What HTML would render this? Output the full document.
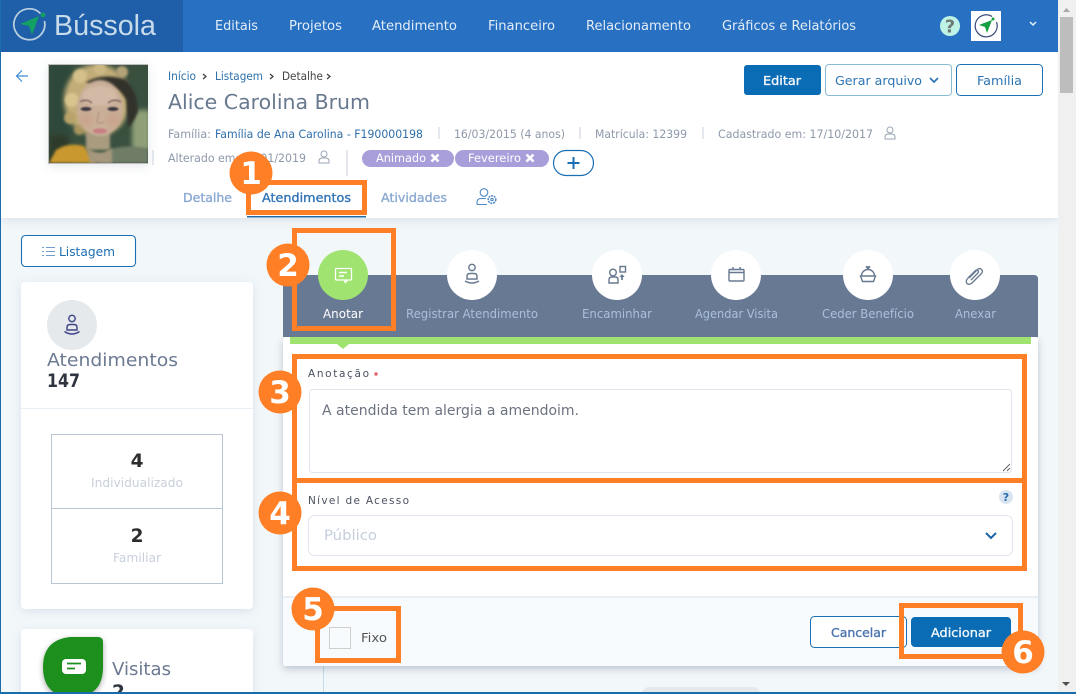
<!DOCTYPE html>
<html lang="pt-BR"><head><meta charset="utf-8"><title>Bússola</title>
<style>
html,body{margin:0;padding:0;width:1076px;height:694px;overflow:hidden;background:#fff}
svg{display:block}
text{font-family:"DejaVu Sans","Liberation Sans",sans-serif;font-size:12px}
.nav{font-size:13.500px;fill:#e3edf7}
.m{fill:#8d98aa;font-size:11.500px}
.b{font-weight:bold}
.sb{font-size:12.500px;stroke-width:.35px}
.lab{font-size:12.500px;fill:#a9bfdc}
.digit{font-size:31px;font-weight:bold;fill:#fff;text-anchor:middle}
.or{fill:none;stroke:#ff7f27;stroke-width:5}
.ic{fill:none;stroke:#66788f;stroke-width:1.400}
</style></head><body>
<svg width="1076" height="694" viewBox="0 0 1076 694" xmlns="http://www.w3.org/2000/svg">
<defs>
<filter id="s1" x="-10%" y="-10%" width="120%" height="125%"><feDropShadow dx="0" dy="2" stdDeviation="5" flood-color="#7f93a8" flood-opacity=".22"/></filter>
<filter id="s2" x="-10%" y="-10%" width="120%" height="120%"><feDropShadow dx="0" dy="3" stdDeviation="4" flood-color="#66788f" flood-opacity=".4"/></filter>
<filter id="s3" x="-30%" y="-30%" width="160%" height="160%"><feDropShadow dx="0" dy="2" stdDeviation="3" flood-color="#000" flood-opacity=".35"/></filter>
<filter id="bl" x="-30%" y="-30%" width="160%" height="160%"><feGaussianBlur stdDeviation="2.500"/></filter>
<filter id="bm" x="-30%" y="-30%" width="160%" height="160%"><feGaussianBlur stdDeviation="1.400"/></filter>
<filter id="bs" x="-30%" y="-30%" width="160%" height="160%"><feGaussianBlur stdDeviation=".7"/></filter>
<clipPath id="ph"><rect x="49" y="65" width="99" height="98"/></clipPath>
</defs>

<!-- page bg -->
<rect x="0" y="0" width="1058" height="694" fill="#f2f7fa"/>
<!-- header white -->
<rect x="1" y="52" width="1057" height="166" fill="#fff" filter="url(#s1)"/>
<!-- nav -->
<rect x="1" y="0" width="1057" height="52" fill="#2870c2"/>
<rect x="1" y="0" width="182" height="52" fill="#1f5ea8"/>
<path d="M40.500 13.500A15.500 15.500 0 1 0 44.500 21" fill="none" stroke="#b9cfe0" stroke-width="1.700"/>
<circle cx="43" cy="15" r="2.400" fill="#12a065"/>
<path d="M20 24L39 16L32 35L29 26Z" fill="#12a065"/>
<text x="54" y="35" fill="#c7dbeb" textLength="102" lengthAdjust="spacingAndGlyphs" style="font-family:'Liberation Sans',sans-serif;font-size:29px">Bússola</text>
<text class="nav" x="215" y="30" textLength="43" lengthAdjust="spacingAndGlyphs">Editais</text>
<text class="nav" x="289" y="30" textLength="53" lengthAdjust="spacingAndGlyphs">Projetos</text>
<text class="nav" x="372" y="30" textLength="85" lengthAdjust="spacingAndGlyphs">Atendimento</text>
<text class="nav" x="488" y="30" textLength="67" lengthAdjust="spacingAndGlyphs">Financeiro</text>
<text class="nav" x="586" y="30" textLength="105" lengthAdjust="spacingAndGlyphs">Relacionamento</text>
<text class="nav" x="722" y="30" textLength="134" lengthAdjust="spacingAndGlyphs">Gráficos e Relatórios</text>
<circle cx="950" cy="26" r="10" fill="#bff3e5"/>
<text x="950" y="32.500" text-anchor="middle" class="b" style="font-size:18px" fill="#6f7b78">?</text>
<rect x="971" y="11" width="30" height="30" fill="#fff"/>
<path d="M992 16.500A11 11 0 1 0 996.500 22" fill="none" stroke="#3b4a7d" stroke-width="1.200"/>
<circle cx="993" cy="19" r="1.500" fill="#12a040"/>
<path d="M979 25L992 20L987 33L985 27Z" fill="#12a040"/>
<path d="M1030 22l3 3 3-3" fill="none" stroke="#e6eef7" stroke-width="1.500"/>

<!-- back arrow -->
<path d="M28 76H17M22 70.500L16.500 76L22 81.500" fill="none" stroke="#3f8ad0" stroke-width="1.200"/>

<!-- photo -->
<rect x="48" y="64" width="100" height="100" fill="#bcbcbc" filter="url(#s1)"/>
<g clip-path="url(#ph)">
<rect x="49" y="65" width="99" height="98" fill="#39503f"/>
<rect x="49" y="65" width="22" height="70" fill="#2f4a3a" filter="url(#bl)"/>
<rect x="132" y="110" width="18" height="40" fill="#8f9f78" filter="url(#bl)"/>
<rect x="49" y="135" width="20" height="30" fill="#2e3a2c" filter="url(#bl)"/>
<!-- frizzy blonde hair -->
<ellipse cx="97" cy="100" rx="33" ry="36" fill="#c2ad78" filter="url(#bl)"/>
<circle cx="72" cy="100" r="7" fill="#d8c58e" filter="url(#bm)"/>
<circle cx="70" cy="118" r="6" fill="#b9a36a" filter="url(#bm)"/>
<circle cx="80" cy="76" r="7" fill="#d4c08a" filter="url(#bm)"/>
<circle cx="100" cy="69" r="6" fill="#cbb783" filter="url(#bm)"/>
<circle cx="122" cy="72" r="6" fill="#b4a278" filter="url(#bm)"/>
<circle cx="79" cy="130" r="5" fill="#a8955e" filter="url(#bm)"/>
<!-- dark hair -->
<path d="M86 82Q105 72 126 80Q138 92 138 112Q134 122 128 128L126 100Q118 84 100 86Q92 86 86 82Z" fill="#33302b" filter="url(#bm)"/>
<!-- neck, face -->
<rect x="86" y="132" width="24" height="18" fill="#a89b7e" filter="url(#bm)"/>
<ellipse cx="100" cy="108" rx="23" ry="28" fill="#c9ae98" filter="url(#bm)"/>
<ellipse cx="100" cy="96" rx="17" ry="10" fill="#d2bba6" filter="url(#bm)"/>
<ellipse cx="86" cy="120" rx="7" ry="7" fill="#c9a58e" filter="url(#bl)"/>
<ellipse cx="113" cy="120" rx="7" ry="7" fill="#c9a58e" filter="url(#bl)"/>
<!-- clothes -->
<path d="M49 163L56 150Q68 142 84 146L96 163Z" fill="#c9982f" filter="url(#bm)"/>
<path d="M100 163L108 150Q128 143 148 150V163Z" fill="#6f7d66" filter="url(#bm)"/>
<path d="M86 146Q98 158 112 148L112 163H90Z" fill="#a6987e" filter="url(#bm)"/>
<!-- eyes, brows, mouth -->
<path d="M80 102Q86 98 92 103M108 103Q114 98 121 102" fill="none" stroke="#77615a" stroke-width="1.300" filter="url(#bs)"/>
<ellipse cx="86" cy="109" rx="5.500" ry="2" fill="#3c3740" filter="url(#bs)"/>
<ellipse cx="113" cy="109" rx="5.500" ry="2" fill="#3c3740" filter="url(#bs)"/>
<path d="M99 112L97 122Q100 124 104 122" fill="none" stroke="#ae8d7b" filter="url(#bs)"/>
<ellipse cx="100" cy="131" rx="7" ry="2.600" fill="#c87f82" filter="url(#bs)"/>
</g>

<!-- breadcrumbs & name -->
<text x="168" y="80" textLength="28" lengthAdjust="spacingAndGlyphs" style="font-size:11.500px" fill="#2d70ad">Início</text>
<path d="M203 74l3 2.500-3 2.500" fill="none" stroke="#444" stroke-width="1.300"/>
<text x="215" y="80" textLength="48" lengthAdjust="spacingAndGlyphs" style="font-size:11.500px" fill="#2d70ad">Listagem</text>
<path d="M270 74l3 2.500-3 2.500" fill="none" stroke="#444" stroke-width="1.300"/>
<text x="282" y="80" textLength="41" lengthAdjust="spacingAndGlyphs" style="font-size:11.500px" fill="#444">Detalhe</text>
<path d="M327 74l3 2.500-3 2.500" fill="none" stroke="#444" stroke-width="1.300"/>
<text x="168" y="109" textLength="202" lengthAdjust="spacingAndGlyphs" style="font-size:20.500px" fill="#68788f">Alice Carolina Brum</text>

<text class="m" x="168" y="138" textLength="43" lengthAdjust="spacingAndGlyphs">Família:</text>
<text x="215" y="138" textLength="208" lengthAdjust="spacingAndGlyphs" style="font-size:11.500px" fill="#2f6ea8">Família de Ana Carolina - F190000198</text>
<path d="M439 127v12M580 127v12M703 127v12" stroke="#c9d2dc"/>
<text class="m" x="454" y="138" textLength="111" lengthAdjust="spacingAndGlyphs">16/03/2015 (4 anos)</text>
<text class="m" x="595" y="138" textLength="92" lengthAdjust="spacingAndGlyphs">Matrícula: 12399</text>
<text class="m" x="718" y="138" textLength="155" lengthAdjust="spacingAndGlyphs">Cadastrado em: 17/10/2017</text>
<g fill="none" stroke="#9aa5b5"><circle cx="890" cy="130" r="3"/><path d="M885 139v-1.500q0-3.500 3-3.500h4q3 0 3 3.500v1.500z"/></g>

<path d="M153 150v15M347 150v26" stroke="#c9d2dc"/>
<text class="m" x="168" y="162" textLength="138" lengthAdjust="spacingAndGlyphs">Alterado em: 17/01/2019</text>
<g fill="none" stroke="#9aa5b5"><circle cx="324" cy="154" r="3"/><path d="M319 163v-1.500q0-3.500 3-3.500h4q3 0 3 3.500v1.500z"/></g>
<rect x="362" y="150" width="92" height="17" rx="8.500" fill="#a89fda"/>
<rect x="455" y="150" width="94" height="17" rx="8.500" fill="#a89fda"/>
<text x="376" y="162" textLength="50" lengthAdjust="spacingAndGlyphs" style="font-size:11.500px" fill="#fff">Animado</text>
<path d="M431.500 154.500l7 7M438.500 154.500l-7 7" stroke="#fff" stroke-width="2.600"/>
<text x="468" y="162" textLength="53" lengthAdjust="spacingAndGlyphs" style="font-size:11.500px" fill="#fff">Fevereiro</text>
<path d="M526.500 154.500l7 7M533.500 154.500l-7 7" stroke="#fff" stroke-width="2.600"/>
<rect x="553.500" y="150.500" width="40" height="25" rx="12.500" fill="#fff" stroke="#1a6fb5" stroke-width="1.200"/>
<path d="M567.500 163h12M573.500 157v12" stroke="#1a6fb5" stroke-width="2"/>

<!-- tabs -->
<text x="183" y="202" textLength="49" lengthAdjust="spacingAndGlyphs" class="sb" fill="#8aa9d2" stroke="#8aa9d2">Detalhe</text>
<text x="262" y="202" textLength="89" lengthAdjust="spacingAndGlyphs" class="sb" fill="#2f73b5" stroke="#2f73b5">Atendimentos</text>
<text x="381" y="202" textLength="66" lengthAdjust="spacingAndGlyphs" class="sb" fill="#8aa9d2" stroke="#8aa9d2">Atividades</text>
<g fill="none" stroke="#4f88c6" stroke-width="1.100"><circle cx="484" cy="192.500" r="3.800"/><path d="M477 204.500v-2q0-4 4-4h5M477 204.500h10"/><circle cx="492" cy="199.500" r="3.800" stroke-dasharray="2 .8" stroke-width="1.500"/><circle cx="492" cy="199.500" r="1.200"/></g>
<rect x="247" y="216" width="119" height="1.500" fill="#1f6aa5"/>

<!-- buttons top -->
<rect x="744" y="65" width="77" height="30" rx="3" fill="#0a6cb5"/>
<text x="763" y="85" textLength="38" lengthAdjust="spacingAndGlyphs" class="sb" fill="#f0f6fb" stroke="#f0f6fb">Editar</text>
<rect x="825.500" y="64.500" width="126" height="31" rx="3.500" fill="#fff" stroke="#8abbd8"/>
<text x="835" y="85" textLength="87" lengthAdjust="spacingAndGlyphs" style="font-size:12.500px" fill="#2d74b5">Gerar arquivo</text>
<path d="M930 78l4 4 4-4" fill="none" stroke="#2d74b5" stroke-width="1.700"/>
<rect x="956.500" y="64.500" width="86" height="31" rx="4" fill="#fff" stroke="#1a6fb5"/>
<text x="977" y="85" textLength="45" lengthAdjust="spacingAndGlyphs" style="font-size:12.500px" fill="#2d74b5">Família</text>

<!-- left col -->
<rect x="21.500" y="235.500" width="114" height="31" rx="4" fill="#fff" stroke="#1a6fb5" stroke-width="1.100"/>
<path d="M46 247.500h9M46 251.500h9M46 255.500h9" stroke="#6e9fcf"/>
<path d="M42 247.500h2M42 251.500h2M42 255.500h2" stroke="#6e9fcf"/>
<text x="59" y="256" textLength="56" lengthAdjust="spacingAndGlyphs" style="font-size:12.500px" fill="#1d6eb5">Listagem</text>

<rect x="21" y="282" width="232" height="327" rx="4" fill="#fff" filter="url(#s1)"/>
<circle cx="72" cy="325" r="25" fill="#e6e9ec"/>
<g fill="none" stroke="#3c4585" stroke-width="1.400"><circle cx="72" cy="318.500" r="3.200"/><path d="M67 330v-2.500q0-3 3-3h4q3 0 3 3v2.500z"/><path d="M64.500 331.500q7.500 5 15 0"/></g>
<text x="47" y="366" textLength="131" lengthAdjust="spacingAndGlyphs" style="font-size:17.500px" fill="#6c7a92">Atendimentos</text>
<text x="47" y="387" textLength="33" lengthAdjust="spacingAndGlyphs" class="b" style="font-size:18.500px" fill="#2f3540">147</text>
<rect x="21" y="408" width="232" height="1" fill="#e8f0f5"/>
<rect x="51.500" y="434.500" width="171" height="75" fill="#fff" stroke="#b9c6d4"/>
<rect x="51.500" y="508.500" width="171" height="75" fill="#fff" stroke="#b9c6d4"/>
<text x="137" y="467" text-anchor="middle" class="b" style="font-size:18.500px" fill="#2d2d2d">4</text>
<text x="91" y="487" textLength="92" lengthAdjust="spacingAndGlyphs" style="font-size:12.500px" fill="#c8d0dc">Individualizado</text>
<text x="137" y="542" text-anchor="middle" class="b" style="font-size:18.500px" fill="#2d2d2d">2</text>
<text x="113" y="562" textLength="48" lengthAdjust="spacingAndGlyphs" style="font-size:12.500px" fill="#c8d0dc">Familiar</text>

<rect x="21" y="629" width="232" height="70" rx="4" fill="#fff" filter="url(#s1)"/>
<path d="M98 637Q103 637 103 642V667Q103 697 73 697Q43 697 43 667Q43 640 70 637Z" fill="#1f8f1f" filter="url(#s3)"/>
<rect x="62" y="659" width="24" height="15" rx="4" fill="#fff"/>
<path d="M67 663.500h14M67 668.500h8" stroke="#1f8f1f" stroke-width="1.800"/>
<text x="112" y="675" textLength="59" lengthAdjust="spacingAndGlyphs" style="font-size:17.500px" fill="#6c7a92">Visitas</text>
<text x="112" y="698" class="b" style="font-size:18.500px" fill="#2f3540">2</text>

<!-- bottom background details -->
<rect x="323" y="660" width="1" height="32" fill="#c5dbe8"/>
<rect x="642" y="687" width="118" height="14" rx="7" fill="#e5e9ed"/>

<!-- form card -->
<rect x="283" y="337" width="755" height="329" rx="3" fill="#fff" filter="url(#s2)"/>
<rect x="283" y="597" width="755" height="69" rx="2" fill="#f7fbfd"/>
<rect x="283" y="596" width="755" height="2" fill="#e8eef2"/>
<path d="M283 337V279q0-4 4-4H1034q4 0 4 4V337Z" fill="#687a93"/>
<rect x="290" y="337" width="741" height="7" fill="#a0e371"/>
<path d="M337 344h12l-6 5z" fill="#a0e371"/>

<!-- action circles -->
<circle cx="343" cy="275" r="25" fill="#a0e371"/>
<g fill="none" stroke="#fff" stroke-width="1.300"><rect x="335.500" y="268.500" width="16" height="11.500" rx="1"/><path d="M339 272.500h8M339 276h5" stroke-width="1.500"/><path d="M344 280l1.500 2.500 2-2.500"/></g>
<circle cx="472" cy="275" r="25" fill="#fff"/>
<g class="ic"><circle cx="472" cy="267.500" r="3.200"/><path d="M467 279v-2.500q0-3 3-3h4q3 0 3 3v2.500z"/><path d="M465 281q7 4 14 0"/></g>
<circle cx="617" cy="275" r="25" fill="#fff"/>
<g class="ic"><circle cx="613" cy="272.500" r="3.300"/><path d="M609 283v-3q0-3 2.500-3h4q2.500 0 2.500 3v3z"/><rect x="620" y="266.500" width="5.500" height="5.500"/></g>
<path d="M622 274l-2.500 3h1.700v3h1.700v-3h1.700z" fill="#66788f"/>
<circle cx="736" cy="275" r="25" fill="#fff"/>
<g class="ic"><rect x="729" y="269.500" width="15" height="11.500" rx="1"/><path d="M729 272.500h15M733 267v3M740 267v3"/></g>
<circle cx="868" cy="275" r="25" fill="#fff"/>
<g class="ic"><path d="M860.500 276h15l-2 5.500h-11z"/><path d="M861.500 276a6.500 6.500 0 0 1 13 0"/></g>
<path d="M868 269.500l-2.500-2.500 1-1.300 1.500.7 1.500-.7 1 1.300z" fill="#66788f"/>
<circle cx="975" cy="275" r="25" fill="#fff"/>
<path d="M969 278l8-8q2.500-2.500 4.500-.5t-.5 4.500l-8.500 8.500q-3.500 3-5.500 1t1-5.500l7.500-7.500q1.500-1 2.500 0t0 2.500l-7 7" fill="none" stroke="#66788f" stroke-width="1.300"/>

<text x="323" y="318" textLength="40" lengthAdjust="spacingAndGlyphs" style="font-size:12.500px" fill="#fff">Anotar</text>
<text class="lab" x="406" y="318" textLength="132" lengthAdjust="spacingAndGlyphs">Registrar Atendimento</text>
<text class="lab" x="582" y="318" textLength="70" lengthAdjust="spacingAndGlyphs">Encaminhar</text>
<text class="lab" x="695" y="318" textLength="83" lengthAdjust="spacingAndGlyphs">Agendar Visita</text>
<text class="lab" x="822" y="318" textLength="92" lengthAdjust="spacingAndGlyphs">Ceder Benefício</text>
<text class="lab" x="955" y="318" textLength="41" lengthAdjust="spacingAndGlyphs">Anexar</text>

<!-- form fields -->
<text x="308" y="377" textLength="61" lengthAdjust="spacing" style="font-size:10.500px" fill="#4a5160">Anotação</text>
<circle cx="376" cy="374" r="1.700" fill="#e0606a"/>
<rect x="309.500" y="389.500" width="702" height="83" rx="3" fill="#fff" stroke="#dfe6ee"/>
<text x="322" y="415" textLength="257" lengthAdjust="spacingAndGlyphs" style="font-size:14px" fill="#6b7280">A atendida tem alergia a amendoim.</text>
<path d="M1003 471l7-7M1007 471l3-3" stroke="#666"/>
<text x="308" y="504" textLength="101" lengthAdjust="spacing" style="font-size:10.500px" fill="#4a5160">Nível de Acesso</text>
<circle cx="1006" cy="497" r="7" fill="#d8e4f0"/>
<text x="1006" y="501" text-anchor="middle" class="b" style="font-size:11px" fill="#2a6db0">?</text>
<rect x="308.500" y="515.500" width="704" height="40" rx="6" fill="#fff" stroke="#dfe6ee"/>
<text x="324" y="540" textLength="53" lengthAdjust="spacingAndGlyphs" style="font-size:14.500px" fill="#c5cedd">Público</text>
<path d="M986 533l5 5 5-5" fill="none" stroke="#1b66a8" stroke-width="2"/>
<rect x="329.500" y="627.500" width="21" height="21" fill="#f7fbfd" stroke="#cfcfcb"/>
<text x="361" y="642" textLength="26" lengthAdjust="spacingAndGlyphs" style="font-size:12.500px" fill="#555">Fixo</text>
<rect x="810.500" y="616.500" width="96" height="31" rx="4" fill="#fff" stroke="#1a6fb5"/>
<text x="831" y="637" textLength="55" lengthAdjust="spacingAndGlyphs" class="sb" fill="#4b74ad" stroke="#4b74ad">Cancelar</text>
<rect x="911" y="617" width="100" height="30" rx="4" fill="#0a6cb5"/>
<text x="931" y="637" textLength="60" lengthAdjust="spacingAndGlyphs" class="sb" fill="#f0f6fb" stroke="#f0f6fb">Adicionar</text>

<!-- orange annotations -->
<rect class="or" x="248.500" y="182.500" width="116" height="30"/>
<rect class="or" x="294.500" y="230.500" width="99" height="98"/>
<rect class="or" x="294.500" y="356.500" width="730" height="124"/>
<rect class="or" x="294.500" y="480.500" width="730" height="88"/>
<rect class="or" x="317.500" y="608.500" width="81" height="52"/>
<rect class="or" x="901.500" y="605.500" width="119" height="51"/>
<g fill="#ff7f27"><circle cx="251" cy="173" r="21.500"/><circle cx="288" cy="265" r="21.500"/><circle cx="280" cy="392" r="21.500"/><circle cx="280" cy="513" r="21.500"/><circle cx="313" cy="609" r="21.500"/><circle cx="1023" cy="652" r="21.500"/></g>
<text class="digit" x="251" y="184">1</text>
<text class="digit" x="288" y="276">2</text>
<text class="digit" x="280" y="403">3</text>
<text class="digit" x="280" y="524">4</text>
<text class="digit" x="313" y="620">5</text>
<text class="digit" x="1023" y="663">6</text>

<!-- scrollbar -->
<rect x="1058" y="0" width="18" height="694" fill="#f0f0f0"/>
<rect x="1060" y="17" width="13" height="76" fill="#bdbdbd"/>
<path d="M1063 12l3.500-4 3.500 4z" fill="#a8a8a8"/>
<path d="M1062 682h8l-4 4z" fill="#505050"/>
<!-- window border -->
<rect x="0" y="0" width="1" height="694" fill="#1b6cab"/>
<rect x="0" y="692" width="1076" height="2" fill="#1b6cab"/>
</svg>
</body></html>
